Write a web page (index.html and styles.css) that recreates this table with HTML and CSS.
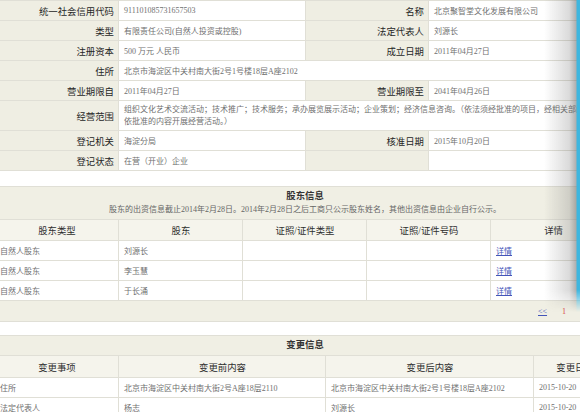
FILE: index.html
```html
<!DOCTYPE html>
<html lang="zh-CN">
<head>
<meta charset="utf-8">
<title>企业信息</title>
<link rel="stylesheet" href="styles.css">
</head>
<body>
<div class="page">
  <table class="info">
    <colgroup><col class="w124"><col class="w187"><col class="w123"><col class="w187"></colgroup>
    <tr><th>统一社会信用代码</th><td>911101085731657503</td><th>名称</th><td>北京聚智堂文化发展有限公司</td></tr>
    <tr><th>类型</th><td>有限责任公司(自然人投资或控股)</td><th>法定代表人</th><td>刘源长</td></tr>
    <tr><th>注册资本</th><td>500 万元 人民币</td><th>成立日期</th><td>2011年04月27日</td></tr>
    <tr><th>住所</th><td colspan="3">北京市海淀区中关村南大街2号1号楼18层A座2102</td></tr>
    <tr><th>营业期限自</th><td>2011年04月27日</td><th>营业期限至</th><td>2041年04月26日</td></tr>
    <tr class="tall"><th>经营范围</th><td colspan="3" class="scope">组织文化艺术交流活动；技术推广；技术服务；承办展览展示活动；企业策划；经济信息咨询。（依法须经批准的项目，经相关部门批准后依批准的内容开展经营活动。）</td></tr>
    <tr><th>登记机关</th><td>海淀分局</td><th>核准日期</th><td>2015年10月20日</td></tr>
    <tr><th>登记状态</th><td>在营（开业）企业</td><th></th><td></td></tr>
  </table>

  <table class="list holders">
    <colgroup><col class="w124"><col class="w124"><col class="w124"><col class="w124"><col class="w125"></colgroup>
    <tr class="cap"><th colspan="5"><div class="cap-title">股东信息</div><div class="cap-sub">股东的出资信息截止2014年2月28日。2014年2月28日之后工商只公示股东姓名，其他出资信息由企业自行公示。</div></th></tr>
    <tr class="head"><th>股东类型</th><th>股东</th><th>证照/证件类型</th><th>证照/证件号码</th><th>详情</th></tr>
    <tr><td>自然人股东</td><td>刘源长</td><td></td><td></td><td><a href="#">详情</a></td></tr>
    <tr><td>自然人股东</td><td>李玉慧</td><td></td><td></td><td><a href="#">详情</a></td></tr>
    <tr><td>自然人股东</td><td>于长涌</td><td></td><td></td><td><a href="#">详情</a></td></tr>
    <tr class="pager"><td colspan="5"><div class="pager-in"><a href="#">&lt;&lt;</a><span class="cur">1</span></div></td></tr>
  </table>

  <table class="list changes">
    <colgroup><col class="w124"><col class="w207"><col class="w208"><col class="w82"></colgroup>
    <tr class="cap cap-one"><th colspan="4"><div class="cap-title">变更信息</div></th></tr>
    <tr class="head head2"><th>变更事项</th><th>变更前内容</th><th>变更后内容</th><th>变更日期</th></tr>
    <tr><td>住所</td><td>北京市海淀区中关村南大街2号A座18层2110</td><td>北京市海淀区中关村南大街2号1号楼18层A座2102</td><td>2015-10-20</td></tr>
    <tr><td>法定代表人</td><td>杨志</td><td>刘源长</td><td>2015-10-20</td></tr>
  </table>
</div>
<div class="edge"></div>
</body>
</html>
```

FILE: styles.css
```css
html, body {
  margin: 0;
  padding: 0;
  background: #ffffff;
}
body {
  overflow: hidden;
  font-family: "Liberation Serif", "Noto Sans CJK SC", serif;
  color: #6a6a6a;
}
.page {
  margin-left: -6px;
  width: 621px;
}
table {
  border-collapse: collapse;
  width: 621px;
  table-layout: fixed;
}
.w124 { width: 124px; }
.w123 { width: 123px; }
.w125 { width: 125px; }
.w187 { width: 187px; }
.w207 { width: 207px; }
.w208 { width: 208px; }
.w82 { width: 82px; }

th, td {
  border: 1px solid #e0dfd6;
  padding: 0 4px 0 5px;
  font-weight: normal;
  white-space: nowrap;
  overflow: hidden;
}
tr { height: 20px; }

.info th {
  background: #efeee3;
  color: #262626;
  font-size: 9.4px;
  text-align: right;
  padding-right: 4px;
}
.info td {
  font-size: 8px;
  color: #707070;
  text-align: left;
}
.info tr.tall { height: 30px; }
.info td.scope {
  white-space: normal;
  line-height: 12px;
  padding-right: 1px;
}

.list { margin-top: 15px; }
.list.changes { margin-top: 13px; }
.list td {
  font-size: 8px;
  color: #707070;
  text-align: left;
}
.cap th {
  background: #f0efe4;
  text-align: center;
  padding: 0;
}
.cap { height: 33px; }
.cap-one { height: 20px; }
.cap-title {
  font-size: 9.4px;
  font-weight: bold;
  color: #333333;
  line-height: 13px;
}
.cap-sub {
  font-size: 8px;
  color: #666666;
  line-height: 13px;
}
.head { height: 21px; }
.head2 { height: 22px; }
.head th {
  background: #f5f4ec;
  color: #2e2e2e;
  font-size: 9.4px;
  text-align: center;
}
a {
  color: #4455b8;
  text-decoration: underline;
}
.pager { height: 21px; }
.pager td {
  background: #f0efe4;
  padding: 0;
}
.pager-in {
  display: flex;
  align-items: center;
  padding-left: 543px;
  gap: 15px;
}
.cur {
  color: #d84a4a;
}

.edge {
  position: fixed;
  top: 0;
  right: 0;
  width: 36px;
  height: 312px;
  background: linear-gradient(to right, rgba(110,110,110,0) 0, rgba(110,110,110,0.25) 70%, rgba(110,110,110,0.55) 32px, #3db6df 33px, #3db6df 36px);
  -webkit-mask-image: linear-gradient(to bottom, #000 0, #000 290px, rgba(0,0,0,0) 312px);
  mask-image: linear-gradient(to bottom, #000 0, #000 290px, rgba(0,0,0,0) 312px);
}
```
